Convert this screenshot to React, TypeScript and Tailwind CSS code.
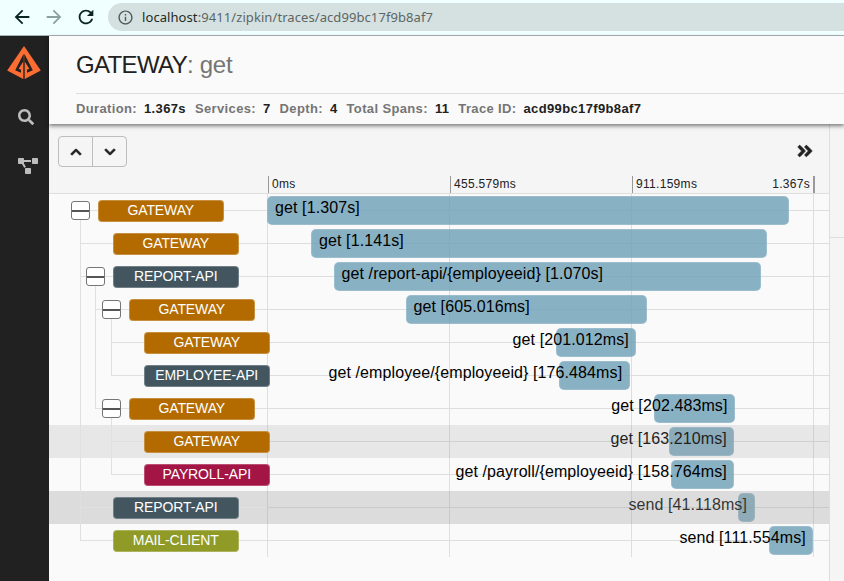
import React from 'react';
import { MdArrowBack, MdArrowForward, MdRefresh, MdInfoOutline } from 'react-icons/md';
import { FaSearch, FaProjectDiagram, FaChevronUp, FaChevronDown, FaAngleDoubleRight } from 'react-icons/fa';

type Span = {
  service: string;
  color: string;
  depth: number;
  parent: boolean;
  start: number;
  width: number;
  label: string;
  labelEnd?: boolean;
  shade?: string;
};

const ORANGE = 'bg-[#b36b00]';
const SLATE = 'bg-[#43565f]';

const spans: Span[] = [
  { service: 'GATEWAY', color: ORANGE, depth: 0, parent: true, start: 0, width: 522, label: 'get [1.307s]' },
  { service: 'GATEWAY', color: ORANGE, depth: 1, parent: false, start: 44, width: 456, label: 'get [1.141s]' },
  { service: 'REPORT-API', color: SLATE, depth: 1, parent: true, start: 66.5, width: 427.5, label: 'get /report-api/{employeeid} [1.070s]' },
  { service: 'GATEWAY', color: ORANGE, depth: 2, parent: true, start: 138.5, width: 241.5, label: 'get [605.016ms]' },
  { service: 'GATEWAY', color: ORANGE, depth: 3, parent: false, start: 289, width: 80.3, label: 'get [201.012ms]', labelEnd: true },
  { service: 'EMPLOYEE-API', color: SLATE, depth: 3, parent: false, start: 292, width: 70.7, label: 'get /employee/{employeeid} [176.484ms]', labelEnd: true },
  { service: 'GATEWAY', color: ORANGE, depth: 2, parent: true, start: 387, width: 81, label: 'get [202.483ms]', labelEnd: true },
  { service: 'GATEWAY', color: ORANGE, depth: 3, parent: false, start: 402, width: 65.3, label: 'get [163.210ms]', labelEnd: true, shade: 'bg-[#999999]/20' },
  { service: 'PAYROLL-API', color: 'bg-[#a31545]', depth: 3, parent: false, start: 403.8, width: 63.6, label: 'get /payroll/{employeeid} [158.764ms]', labelEnd: true },
  { service: 'REPORT-API', color: SLATE, depth: 1, parent: false, start: 471, width: 16.5, label: 'send [41.118ms]', labelEnd: true, shade: 'bg-[#9f9f9f]/32' },
  { service: 'MAIL-CLIENT', color: 'bg-[#8f9a27]', depth: 1, parent: false, start: 501.7, width: 44.6, label: 'send [111.554ms]', labelEnd: true },
];

// Vertical branches of the span tree, as [x, first y, last y].
const branches = [
  [31.5, 16, 347],
  [46.5, 82, 215],
  [62.5, 115, 182],
  [62.5, 214, 281],
];

function Logo() {
  return (
    <svg width="36" height="36" viewBox="0 0 36 36" className="block">
      <path d="M18 1 34.8 25.6 18.8 34H17.2L1.2 25.6Z" fill="#fb6d33" />
      <path d="M17.3 9.5V16.5L12.6 23.800 15 24.800V27.800L9.200 25.200ZM18.700 9.500V16.500L23.400 23.800 21 24.800V27.800L26.800 25.200Z" fill="#212121" />
      <path d="M17.300 9.500h1.400V34.500h-1.400Z" fill="#212121" />
    </svg>
  );
}

function BrowserBar() {
  return (
    <div className="flex h-9 shrink-0 items-center border-b border-[#a9b3b2] bg-[#f0ffff] pl-[11px]">
      <MdArrowBack size={22} color="#0b2524" className="mb-px" />
      <MdArrowForward size={22} color="#8aa19f" className="mb-px ml-[10px]" />
      <MdRefresh size={22} color="#0b2524" className="mb-px ml-[10px]" />
      <div className="mb-px ml-[11px] flex h-7 flex-1 items-center rounded-l-full bg-[#d5e1e0] pl-[9px]">
        <MdInfoOutline size={17} color="#4f5c5b" />
        <span className="ml-2 mt-px whitespace-nowrap font-['Noto_Sans',sans-serif] text-[13px] tracking-[0.08px] text-[#5c6665]">
          <span className="text-[#1d2a29]">localhost</span>:9411/zipkin/traces/acd99bc17f9b8af7
        </span>
      </div>
    </div>
  );
}

function Sidebar() {
  return (
    <nav className="flex w-[49px] shrink-0 flex-col bg-[#212121]">
      <div className="pl-1.5 pt-[9px]"><Logo /></div>
      <FaSearch size={16} color="#bdbdbd" className="ml-[18px] mt-[28px]" />
      <FaProjectDiagram color="#bdbdbd" className="ml-[18px] mt-[33px] h-4 w-5" />
    </nav>
  );
}

const facts = [
  ['Duration:', '1.367s'],
  ['Services:', '7'],
  ['Depth:', '4'],
  ['Total Spans:', '11'],
  ['Trace ID:', 'acd99bc17f9b8af7'],
];

function TraceHeader() {
  return (
    <header className="relative z-10 h-[88px] shrink-0 bg-[#fafafa] pl-[27px] shadow-[0_2px_4px_rgba(0,0,0,0.5)]">
      <h1 className="flex h-[57px] items-center whitespace-pre text-[24px] tracking-[-0.28px] text-[#757575]">
        <span className="tracking-[-0.65px] text-[#212121]">GATEWAY</span>: get
      </h1>
      <div className="flex h-[30px] items-center gap-[9px] border-t border-[#dedede] text-[13px] font-bold tracking-[0.36px]">
        {facts.map(([name, value]) => (
          <div key={name} className="flex gap-[7px] whitespace-nowrap">
            <span className="text-[#757575]">{name}</span>
            <span className="text-[#212121]">{value}</span>
          </div>
        ))}
      </div>
    </header>
  );
}

function Toolbar() {
  return (
    <div className="flex h-[52px] items-start justify-between pl-[9px] pr-[15px] pt-3">
      <div className="flex h-[31px] w-[69px] rounded border border-[#bdbdbd]">
        <button className="flex w-[34px] items-center justify-center border-r border-[#bdbdbd]">
          <FaChevronUp size={12} color="#212121" strokeWidth={36} />
        </button>
        <button className="flex flex-1 items-center justify-center">
          <FaChevronDown size={12} color="#212121" strokeWidth={36} />
        </button>
      </div>
      <FaAngleDoubleRight size={18} color="#212121" strokeWidth={20} className="mt-1.5" />
    </div>
  );
}

function Axis() {
  return (
    <div className="flex h-[18px] border-b border-[#dedede] pl-[219px] text-[12px] leading-[17px] tracking-[0.3px] text-[#212121]">
      <div className="w-[182px] border-l border-[#999] pl-[3px]">0ms</div>
      <div className="w-[182px] border-l border-[#999] pl-[3px]">455.579ms</div>
      <div className="flex w-[183px] justify-between border-l border-r-2 border-[#999] pl-[3px] pr-[3px]">
        <span>911.159ms</span>
        <span>1.367s</span>
      </div>
    </div>
  );
}

function SpanRow({ span }: { span: Span }) {
  const indent = Math.floor(span.depth * 15.5);
  return (
    <div className="relative flex h-[33px] items-center">
      <div className="flex w-[218px] shrink-0 items-center">
        <div className="relative z-20 flex shrink-0 items-center" style={{ marginLeft: indent + 22 }}>
          <div className={span.parent ? 'flex h-[19px] w-[19px] flex-col justify-center rounded-[3px] border border-[#757575] bg-white' : 'h-[19px] w-[19px]'}>
            {span.parent && <div className="h-0.5 bg-[#555]" />}
          </div>
          <div className={`ml-2 flex h-[22px] w-[125.5px] items-center justify-center rounded-[4px] border border-white/25 text-[14px] tracking-[-0.12px] text-white ${span.color}`}>
            {span.service}
          </div>
        </div>
      </div>
      <div className="relative h-full flex-1">
        <div className="absolute top-0.5 h-[29px] rounded-[5px] border border-white/15 bg-[#6d9fb6]/80" style={{ left: span.start, width: span.width }} />
        <span
          className="absolute top-[5px] whitespace-nowrap text-[16px] leading-[18px] tracking-[0.1px] text-black"
          style={span.labelEnd ? { right: 562 - span.start - span.width + 7.5 } : { left: span.start + 8 }}
        >
          {span.label}
        </span>
      </div>
      {span.shade && <div className={`absolute inset-y-0 left-0 right-0 ${span.shade}`} />}
    </div>
  );
}

function Gridlines() {
  return (
    <svg width="780" height="363" className="pointer-events-none absolute left-0 top-0" stroke="#dedede" shapeRendering="crispEdges">
      {[218.5, 400.5, 582.5, 764.5].map((x) => <line key={x} x1={x} x2={x} y1={0} y2={363} />)}
      {spans.map((_, i) => <line key={i} x1={218} x2={780} y1={i * 33 + 16.5} y2={i * 33 + 16.5} />)}
    </svg>
  );
}

function TreeLines() {
  return (
    <svg width="780" height="363" className="pointer-events-none absolute left-0 top-0 z-10" stroke="#e0e0e0" shapeRendering="crispEdges">
      {branches.map(([x, a, b], i) => <line key={i} x1={x} x2={x} y1={a} y2={b} />)}
      {spans.map((s, i) => (
        <line key={i} x1={31.5 + Math.max(0, s.depth - 1) * 15.5} x2={218} y1={i * 33 + 16.5} y2={i * 33 + 16.5} />
      ))}
    </svg>
  );
}

export default function App() {
  return (
    <div className="flex h-[581px] w-[844px] flex-col overflow-hidden bg-[#fafafa] font-['Liberation_Sans',Arial,sans-serif]">
      <BrowserBar />
      <div className="flex min-h-0 flex-1">
        <Sidebar />
        <main className="flex min-w-0 flex-1 flex-col">
          <TraceHeader />
          <div className="flex min-h-0 flex-1">
            <section className="w-[780px] shrink-0">
              <div className="bg-[#f5f5f5]">
                <Toolbar />
                <Axis />
              </div>
              <div className="relative">
                <Gridlines />
                <TreeLines />
                {spans.map((span, i) => <SpanRow key={i} span={span} />)}
              </div>
            </section>
            <aside className="flex-1 border-l border-[#dedede] bg-[#f5f5f5]">
              <div className="h-[114px] border-b border-[#dedede]" />
            </aside>
          </div>
        </main>
      </div>
    </div>
  );
}
